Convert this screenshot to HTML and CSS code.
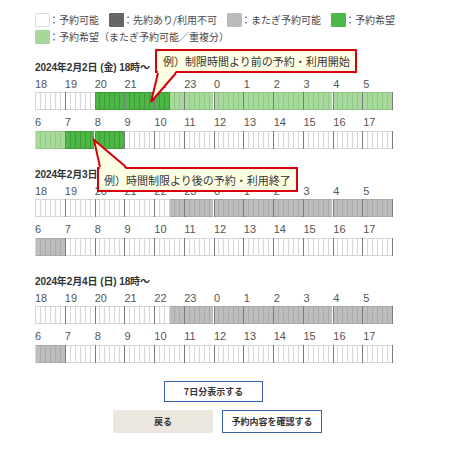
FILE: index.html
```html
<!DOCTYPE html>
<html lang="ja">
<head>
<meta charset="utf-8">
<link rel="stylesheet" href="styles.css">
</head>
<body>
<div class="page">
  <div class="legend">
    <div class="legend-item"><span class="swatch sw-free"></span>：予約可能</div>
    <div class="legend-item"><span class="swatch sw-taken"></span>：先約あり/利用不可</div>
    <div class="legend-item"><span class="swatch sw-span"></span>：またぎ予約可能</div>
    <div class="legend-item"><span class="swatch sw-want"></span>：予約希望</div>
    <div class="legend-item"><span class="swatch sw-want-span"></span>：予約希望（またぎ予約可能／重複分）</div>
  </div>

  <section class="day">
    <div class="day-title">2024年2月2日 (金) 18時～</div>
    <div class="hours" data-start="18"></div>
    <div class="bar" data-cells="w12 G15 L45"></div>
    <div class="hours hours-2" data-start="6"></div>
    <div class="bar bar-2" data-cells="L6 G12 w54"></div>
  </section>

  <section class="day">
    <div class="day-title">2024年2月3日 (土) 18時～</div>
    <div class="hours" data-start="18"></div>
    <div class="bar" data-cells="w27 g45"></div>
    <div class="hours hours-2" data-start="6"></div>
    <div class="bar bar-2" data-cells="g6 w66"></div>
  </section>

  <section class="day">
    <div class="day-title">2024年2月4日 (日) 18時～</div>
    <div class="hours" data-start="18"></div>
    <div class="bar" data-cells="w27 g45"></div>
    <div class="hours hours-2" data-start="6"></div>
    <div class="bar bar-2" data-cells="g6 w66"></div>
  </section>

  <div class="actions">
    <button class="btn btn-week">7日分表示する</button>
  </div>
  <div class="actions actions-main">
    <button class="btn btn-back">戻る</button>
    <button class="btn btn-confirm">予約内容を確認する</button>
  </div>

  <div class="callout callout-1">
    <span class="callout-text">例）制限時間より前の予約・利用開始</span>
    <svg class="tail tail-1" width="40" height="40" viewBox="0 0 40 40">
      <polygon points="7,0 0,31 25,0" fill="#ffffe3"/>
      <polyline points="7,2 0,31 25,2" fill="none" stroke="#d9000d" stroke-width="2"/>
    </svg>
  </div>

  <div class="callout callout-2">
    <span class="callout-text">例）時間制限より後の予約・利用終了</span>
    <svg class="tail tail-2" width="40" height="40" viewBox="0 0 40 40">
      <polygon points="6,29 0,0 32,29" fill="#ffffe3"/>
      <polyline points="6,27 0,0 32,27" fill="none" stroke="#d9000d" stroke-width="2"/>
    </svg>
  </div>
</div>
<script src="script.js"></script>
</body>
</html>
```

FILE: styles.css
```css
* { box-sizing: border-box; }
body {
  margin: 0;
  font-family: "Liberation Sans", "Noto Sans CJK JP", sans-serif;
  color: #333;
  background: #fff;
}
.page {
  position: relative;
  padding: 13px 0 0 35px;
  width: 455px;
  height: 450px;
}
.legend {
  display: flex;
  flex-wrap: wrap;
  width: 372px;
  column-gap: 10px;
  row-gap: 3px;
  font-family: "Noto Sans CJK JP", sans-serif;
  font-size: 10px;
  line-height: 14px;
  color: #4a4a4a;
}
.legend-item {
  display: flex;
  align-items: center;
  white-space: nowrap;
}
.swatch {
  display: inline-block;
  width: 15px;
  height: 14px;
  border-radius: 1px;
  margin-right: -1px;
}
.sw-free { background: #fff; border: 1px solid #dcdcdc; }
.sw-taken { background: #666; }
.sw-span { background: #bbb; }
.sw-want { background: #4db848; }
.sw-want-span { background: #a6d89b; }

.day { margin-top: 19px; }
.day:first-of-type { margin-top: 17px; }
.day-title {
  font-size: 10px;
  line-height: 14px;
  font-weight: bold;
  color: #333;
  letter-spacing: -0.1px;
}
.hours {
  display: grid;
  grid-template-columns: repeat(12, 1fr);
  width: 358px;
  margin-top: 2px;
  font-family: "Liberation Sans", sans-serif;
  font-size: 11px;
  line-height: 14px;
  color: #555;
}
.hours-2 { margin-top: 5px; }
.bar {
  display: grid;
  grid-template-columns: repeat(12, 1fr);
  width: 358px;
  height: 18px;
  margin-top: 1px;
  border-left: 1px solid #d6d6d6;
}
.bar-2 { margin-top: 2px; }
.hour {
  display: flex;
  border-right: 1px solid #7a7a7a;
}
.cell {
  flex: 1;
  border-top: 1px solid #d6d6d6;
  border-bottom: 1px solid #d6d6d6;
  border-right: 1px solid #d6d6d6;
  background: #fff;
}
.cell:last-child { border-right: none; }
.cell.s-G { background: #4cb744; border-color: #3d9b36; }
.cell.s-L { background: #a8d99d; border-color: #90c884; }
.cell.s-g { background: #bdbdbd; border-color: #a9a9a9; }

.actions {
  display: flex;
  gap: 9px;
  margin-top: 18px;
  padding-left: 129px;
}
.actions-main {
  margin-top: 8px;
  padding-left: 78px;
}
.btn {
  font-family: "Noto Sans CJK JP", sans-serif;
  font-size: 9px;
  font-weight: bold;
  color: #333;
  background: #fff;
  border: 1px solid #3560ad;
  padding: 0;
  margin: 0;
}
.btn-week { width: 99px; height: 21px; }
.btn-back { width: 100px; height: 23px; background: #ebe6de; border-color: #ebe6de; border-radius: 2px; }
.btn-confirm { width: 100px; height: 23px; border-width: 1.5px; }

.callout {
  position: absolute;
  display: flex;
  align-items: center;
  background: #ffffe3;
  border: 2px solid #d9000d;
  font-family: "Noto Sans CJK JP", sans-serif;
  font-size: 11px;
  color: #333;
  white-space: nowrap;
}
.callout-1 { left: 155px; top: 49px; width: 202px; height: 24px; padding-left: 6px; }
.callout-2 { left: 97px; top: 167px; width: 201px; height: 25px; padding-left: 5px; }
.tail { position: absolute; overflow: visible; }
.tail-1 { left: -6px; bottom: -40px; }
.tail-2 { left: -5px; top: -29px; }
```

FILE: script.js
```js
document.querySelectorAll('.hours').forEach(function (row) {
  var start = parseInt(row.dataset.start, 10);
  for (var i = 0; i < 12; i++) {
    var s = document.createElement('span');
    s.textContent = (start + i) % 24;
    row.appendChild(s);
  }
});
document.querySelectorAll('.bar').forEach(function (bar) {
  var seq = [];
  bar.dataset.cells.split(' ').forEach(function (tok) {
    var st = tok.charAt(0), n = parseInt(tok.slice(1), 10);
    for (var k = 0; k < n; k++) seq.push(st);
  });
  for (var h = 0; h < 12; h++) {
    var hour = document.createElement('div');
    hour.className = 'hour';
    for (var c = 0; c < 6; c++) {
      var cell = document.createElement('div');
      cell.className = 'cell s-' + seq[h * 6 + c];
      hour.appendChild(cell);
    }
    bar.appendChild(hour);
  }
});
```
